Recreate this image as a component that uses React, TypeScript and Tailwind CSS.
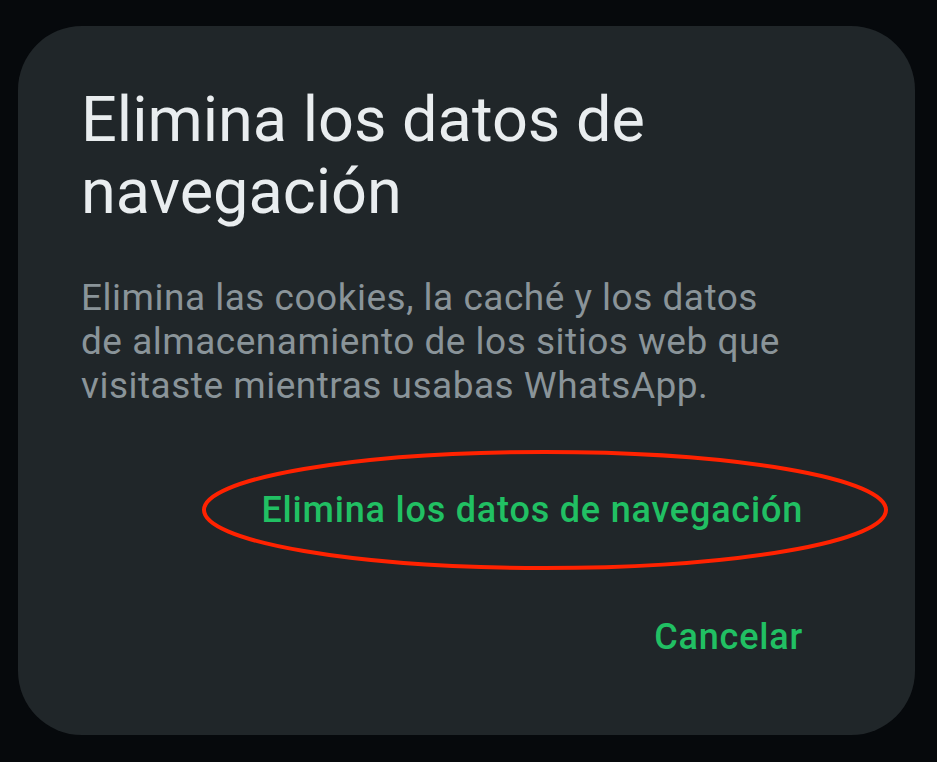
export default function App() {
  return (
    <div className="h-[762px] w-[937px] bg-[#06090c] pt-[26px] pl-[18px]" style={{ fontFamily: 'Roboto, "Noto Sans", sans-serif' }}>
      <div className="relative flex h-[709px] w-[897px] flex-col rounded-[64px] bg-[#202629] pl-[63px] pr-[112px]">
        <h1 className="mt-[58px] text-[63px] leading-[72px] font-normal text-[#e9edef]">
          Elimina los datos de navegación
        </h1>
        <p className="mt-[48px] text-[37px] leading-[44px] tracking-[0.5px] text-[#8a9499]">
          Elimina las cookies, la caché y los datos de almacenamiento de los sitios web que visitaste mientras usabas WhatsApp.
        </p>
        <div className="mt-[80px] flex flex-col items-end gap-[83px]">
          <button className="text-[36px] leading-[44px] tracking-[0.8px] font-medium text-[#21c063]">Elimina los datos de navegación</button>
          <button className="text-[36px] leading-[44px] tracking-[0.8px] font-medium text-[#21c063]">Cancelar</button>
        </div>
        <svg className="pointer-events-none absolute left-[182px] top-[421px]" width="690" height="126" viewBox="0 0 690 126">
          <ellipse cx="345" cy="63" rx="341" ry="58" fill="none" stroke="#ff2200" strokeWidth="4" />
        </svg>
      </div>
    </div>
  )
}
